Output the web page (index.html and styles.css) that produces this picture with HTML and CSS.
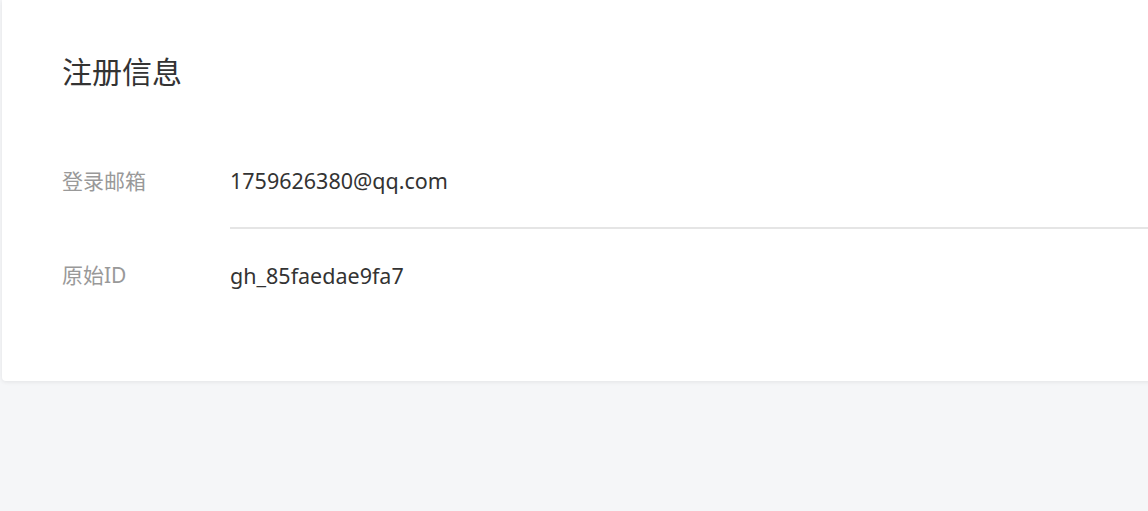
FILE: index.html
```html
<!DOCTYPE html>
<html lang="zh-CN">
<head>
  <meta charset="UTF-8">
  <title>注册信息</title>
  <link rel="stylesheet" href="styles.css">
</head>
<body>
  <div class="page">
    <section class="card">
      <h2 class="card__title">注册信息</h2>
      <dl class="info">
        <div class="info__row">
          <dt class="info__label">登录邮箱</dt>
          <dd class="info__value">1759626380@qq.com</dd>
        </div>
        <div class="info__row">
          <dt class="info__label">原始ID</dt>
          <dd class="info__value">gh_85faedae9fa7</dd>
        </div>
      </dl>
    </section>
  </div>
</body>
</html>
```

FILE: styles.css
```css
*, *::before, *::after {
  margin: 0;
  padding: 0;
  box-sizing: border-box;
}
body {
  font-family: "Noto Sans", "Noto Sans CJK SC", sans-serif;
  background: #f5f6f8;
  color: #333;
  overflow: hidden;
}
.page {
  height: 511px;
  padding-left: 2px;
}

/* card */
.card {
  width: 1170px;
  background: #fff;
  border-radius: 0 0 4px 4px;
  box-shadow: 0 1px 4px rgba(0, 0, 0, 0.08);
  padding: 52px 0 60px 60px;
}
.card__title {
  font-size: 30px;
  font-weight: normal;
  line-height: 40px;
  color: #333;
}

/* key / value rows */
.info {
  margin-top: 41px;
}
.info__row {
  display: flex;
  align-items: center;
  height: 94px;
}
.info__label {
  width: 168px;
  flex: none;
  font-size: 21px;
  color: #999;
}
.info__value {
  flex: 1;
  align-self: stretch;
  display: flex;
  align-items: center;
  font-size: 21.5px;
  color: #333;
}
.info__row + .info__row .info__value {
  border-top: 2px solid #e5e5e5;
}
```
